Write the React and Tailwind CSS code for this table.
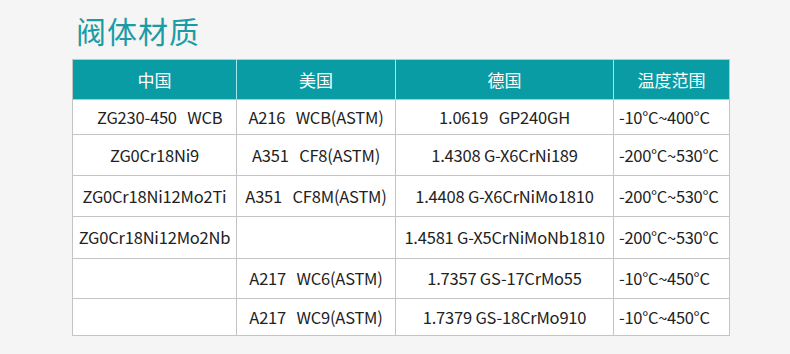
const rows = [
  { cn: '   ZG230-450   WCB', us: 'A216   WCB(ASTM)', de: '1.0619   GP240GH', t: '-10°C~400°C', h: 'h-[35px]' },
  { cn: 'ZG0Cr18Ni9', us: 'A351   CF8(ASTM)', de: '1.4308 G-X6CrNi189', t: '-200°C~530°C', h: 'h-[41px]' },
  { cn: 'ZG0Cr18Ni12Mo2Ti', us: 'A351   CF8M(ASTM)', de: '1.4408 G-X6CrNiMo1810', t: '-200°C~530°C', h: 'h-[41px]' },
  { cn: 'ZG0Cr18Ni12Mo2Nb', us: '', de: '1.4581 G-X5CrNiMoNb1810', t: '-200°C~530°C', h: 'h-[42px]' },
  { cn: '', us: 'A217   WC6(ASTM)', de: '1.7357 GS-17CrMo55', t: '-10°C~450°C', h: 'h-[40px]' },
  { cn: '', us: 'A217   WC9(ASTM)', de: '1.7379 GS-18CrMo910', t: '-10°C~450°C', h: 'h-[37px]' },
];

export default function App() {
  return (
    <div className="w-[790px] h-[354px] bg-[#f5f5f5] font-['Noto_Sans_CJK_SC','Noto_Sans',sans-serif] overflow-hidden">
      <h1 className="pl-[76px] pt-[9px] h-[59px] text-[30px] leading-[42px] text-[#1b9ca5] font-normal tracking-[1px]">阀体材质</h1>
      <table className="ml-[72px] w-[657px] table-fixed border-collapse text-[16.5px] text-[#222] bg-white">
        <colgroup>
          <col className="w-[164px]" />
          <col className="w-[159px]" />
          <col className="w-[218px]" />
          <col className="w-[116px]" />
        </colgroup>
        <thead>
          <tr className="h-[40px] bg-[#0a9ca5] text-white text-[17px]">
            <th className="font-normal border border-[#c4c4c4] border-r-[#a6e6ea]">中国</th>
            <th className="font-normal border border-[#c4c4c4] border-x-[#a6e6ea]">美国</th>
            <th className="font-normal border border-[#c4c4c4] border-x-[#a6e6ea]">德国</th>
            <th className="font-normal border border-[#c4c4c4] border-l-[#a6e6ea]">温度范围</th>
          </tr>
        </thead>
        <tbody>
          {rows.map((r, i) => (
            <tr key={i} className={r.h}>
              <td className="border border-[#c4c4c4] text-center whitespace-pre px-0 tracking-[-0.2px]">{r.cn}</td>
              <td className="border border-[#c4c4c4] text-center whitespace-pre px-0 tracking-[-0.2px]">{r.us}</td>
              <td className="border border-[#c4c4c4] text-center whitespace-pre px-0 tracking-[-0.2px]">{r.de}</td>
              <td className="border border-[#c4c4c4] text-left whitespace-pre pl-[5px] tracking-[-0.3px]">{r.t}</td>
            </tr>
          ))}
        </tbody>
      </table>
    </div>
  );
}
